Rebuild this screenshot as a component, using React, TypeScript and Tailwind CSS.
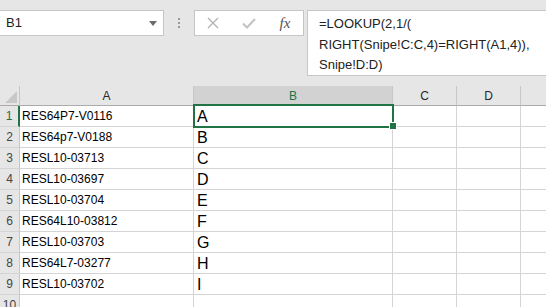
import React from 'react'

const ROWS = [
  { n: 1, a: 'RES64P7-V0116', b: 'A' },
  { n: 2, a: 'RES64p7-V0188', b: 'B' },
  { n: 3, a: 'RESL10-03713', b: 'C' },
  { n: 4, a: 'RESL10-03697', b: 'D' },
  { n: 5, a: 'RESL10-03704', b: 'E' },
  { n: 6, a: 'RES64L10-03812', b: 'F' },
  { n: 7, a: 'RESL10-03703', b: 'G' },
  { n: 8, a: 'RES64L7-03277', b: 'H' },
  { n: 9, a: 'RESL10-03702', b: 'I' },
  { n: 10, a: '', b: '' },
]

export default function App() {
  return (
    <div className="relative h-[307px] w-[546px] overflow-hidden bg-white font-['Liberation_Sans',Arial,sans-serif] text-black">
      {/* barra de fórmulas */}
      <div className="flex h-[86px] items-start bg-[#e6e6e6] pt-[10px]">
        <div className="flex h-[26px] w-[164px] items-center justify-between border border-l-0 border-[#c6c6c6] bg-white pl-[6px] pr-[6px]">
          <span className="text-[13px] text-[#222]">B1</span>
          <svg width="8" height="5" viewBox="0 0 8 5">
            <path d="M0 0h8L4 5z" fill="#6b6b6b" />
          </svg>
        </div>
        <div className="flex h-[26px] w-[30px] flex-col items-center justify-center gap-[2px]">
          <span className="h-[2px] w-[2px] bg-[#9a9a9a]" />
          <span className="h-[2px] w-[2px] bg-[#9a9a9a]" />
          <span className="h-[2px] w-[2px] bg-[#9a9a9a]" />
        </div>
        <div className="grid h-[26px] w-[110px] grid-cols-3 border border-[#c6c6c6] bg-white">
          <div className="flex items-center justify-center">
            <svg width="12" height="12" viewBox="0 0 12 12">
              <path d="M1 1l10 10M11 1L1 11" stroke="#b4b4b4" strokeWidth="1.4" fill="none" />
            </svg>
          </div>
          <div className="flex items-center justify-center">
            <svg width="14" height="11" viewBox="0 0 14 11">
              <path d="M1 5.5l4 4L13 1" stroke="#c2c2c2" strokeWidth="2" fill="none" />
            </svg>
          </div>
          <div className="flex items-center justify-center">
            <span className="font-['Liberation_Serif',serif] text-[15px] italic text-[#555]">fx</span>
          </div>
        </div>
        <div className="ml-[3px] h-[66px] flex-1 border border-r-0 border-[#c6c6c6] bg-white pl-[11px] pt-[3px] text-[13px] leading-[20.5px] text-[#222]">
          <div>=LOOKUP(2,1/(</div>
          <div>RIGHT(Snipe!C:C,4)=RIGHT(A1,4)),</div>
          <div>Snipe!D:D)</div>
        </div>
      </div>

      {/* encabezados de columna */}
      <div className="flex h-[20px] text-[12px] text-[#262626]">
        <div className="flex w-[20px] items-end justify-end border-r border-b border-r-[#c6c6c6] border-b-[#ababab] bg-[#e6e6e6] pr-[2px] pb-[2px]">
          <svg width="12" height="12" viewBox="0 0 12 12">
            <path d="M12 0v12H0z" fill="#c8c8c8" />
          </svg>
        </div>
        <div className="flex w-[174px] items-center justify-center border-r border-b border-r-[#c6c6c6] border-b-[#ababab] bg-[#e6e6e6]">A</div>
        <div className="flex w-[199px] items-center justify-center border-r border-b border-r-[#c6c6c6] border-b-[#ababab] bg-[#d2d2d2] text-[#217346]">B</div>
        <div className="flex w-[64px] items-center justify-center border-r border-b border-r-[#c6c6c6] border-b-[#ababab] bg-[#e6e6e6]">C</div>
        <div className="flex w-[64px] items-center justify-center border-r border-b border-r-[#c6c6c6] border-b-[#ababab] bg-[#e6e6e6]">D</div>
        <div className="flex flex-1 items-center justify-center border-b border-b-[#ababab] bg-[#e6e6e6]" />
      </div>

      {/* filas */}
      {ROWS.map((r) => (
        <div key={r.n} className="flex h-[21px]">
          <div
            className={`flex w-[20px] items-end justify-center border-b border-b-[#d4d4d4] bg-[#e6e6e6] pb-[1px] text-[12px] ${
              r.n === 1 ? 'border-r-2 border-r-[#217346] text-[#217346]' : 'border-r border-r-[#c6c6c6] text-[#444]'
            }`}
          >
            {r.n}
          </div>
          <div className="flex w-[174px] items-end border-r border-b border-[#d4d4d4] pb-[1px] pl-[2px] text-[12px]">{r.a}</div>
          <div className="flex w-[199px] items-end border-r border-b border-[#d4d4d4] pl-[3px] text-[16px] leading-[18px]">{r.b}</div>
          <div className="w-[64px] border-r border-b border-[#d4d4d4]" />
          <div className="w-[64px] border-r border-b border-[#d4d4d4]" />
          <div className="flex-1 border-b border-[#d4d4d4]" />
        </div>
      ))}

      {/* selección B1 */}
      <div className="absolute top-[104px] left-[193px] h-[24px] w-[201px] border-2 border-[#217346]" />
      <div className="absolute top-[123px] left-[390px] h-[6px] w-[6px] bg-[#217346] outline outline-1 outline-white" />
    </div>
  )
}
